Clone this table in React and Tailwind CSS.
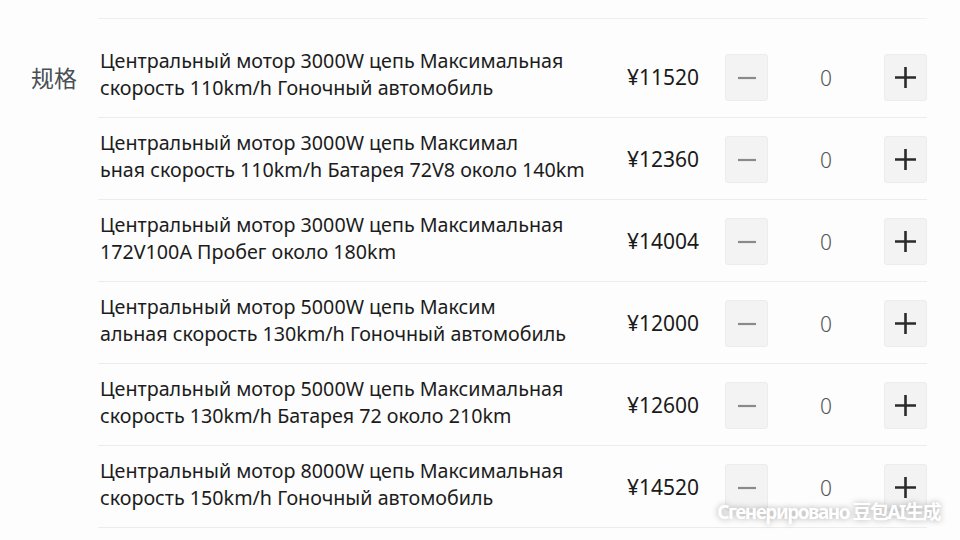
import React from 'react';

const data = [
  {
    first: 'Центральный мотор 3000W цепь Максимальная',
    second: 'скорость 110km/h Гоночный автомобиль',
    price: '¥11520',
  },
  {
    first: 'Центральный мотор 3000W цепь Максимал',
    second: 'ьная скорость 110km/h Батарея 72V8 около 140km',
    price: '¥12360',
  },
  {
    first: 'Центральный мотор 3000W цепь Максимальная',
    second: '172V100A Пробег около 180km',
    price: '¥14004',
  },
  {
    first: 'Центральный мотор 5000W цепь Максим',
    second: 'альная скорость 130km/h Гоночный автомобиль',
    price: '¥12000',
  },
  {
    first: 'Центральный мотор 5000W цепь Максимальная',
    second: 'скорость 130km/h Батарея 72 около 210km',
    price: '¥12600',
  },
  {
    first: 'Центральный мотор 8000W цепь Максимальная',
    second: 'скорость 150km/h Гоночный автомобиль',
    price: '¥14520',
  },
];

const font = { fontFamily: '"Noto Sans", "Noto Sans CJK SC", sans-serif' };

const Stepper = ({ kind }) => (
  <button className="mt-[18px] flex h-[47px] w-[43px] items-center justify-center rounded-[3px] border border-[#ececec] bg-[#f3f3f3]">
    {kind === 'minus' ? (
      <svg width="20" height="20" viewBox="0 0 20 20">
        <path d="M1 10h18" stroke="#8a8a8a" strokeWidth="2.2" />
      </svg>
    ) : (
      <svg width="23" height="23" viewBox="0 0 23 23">
        <path d="M1 11.5h21M11.5 1v21" stroke="#2b2b2b" strokeWidth="2.6" />
      </svg>
    )}
  </button>
);

const Row = ({ item }) => (
  <div className="flex h-[82px] items-start border-b border-[#ececec]">
    <div className="w-[529px] pt-[11px] pl-[2px] text-[19.7px] leading-[27px] text-[#1c1c1c] whitespace-nowrap">
      <div>{item.first}</div>
      <div>{item.second}</div>
    </div>
    <div className="w-[98px] pt-[26px] text-[21px] leading-[30px] text-[#1a1a1a]">{item.price}</div>
    <Stepper kind="minus" />
    <div className="flex-1 pt-[27px] text-center text-[21px] leading-[30px] font-light text-[#555]">0</div>
    <Stepper kind="plus" />
  </div>
);

export default function App() {
  return (
    <div className="relative h-[540px] w-[960px] overflow-hidden bg-[#fdfdfd]" style={font}>
      <div className="flex pt-[18px]">
        <div className="w-[98px] pl-[31px] pt-[45px] text-[23px] leading-[30px] text-[#4a4f57]">规格</div>
        <div className="w-[829px] border-t border-[#efefef] pt-[17px]">
          {data.map((item) => (
            <Row key={item.price} item={item} />
          ))}
        </div>
      </div>
      <div className="absolute right-[20px] bottom-[14px] text-[19px] font-bold tracking-[-1.5px] text-white [text-shadow:0_0_6px_rgba(0,0,0,0.35)]">
        Сгенерировано 豆包AI生成
      </div>
    </div>
  );
}
